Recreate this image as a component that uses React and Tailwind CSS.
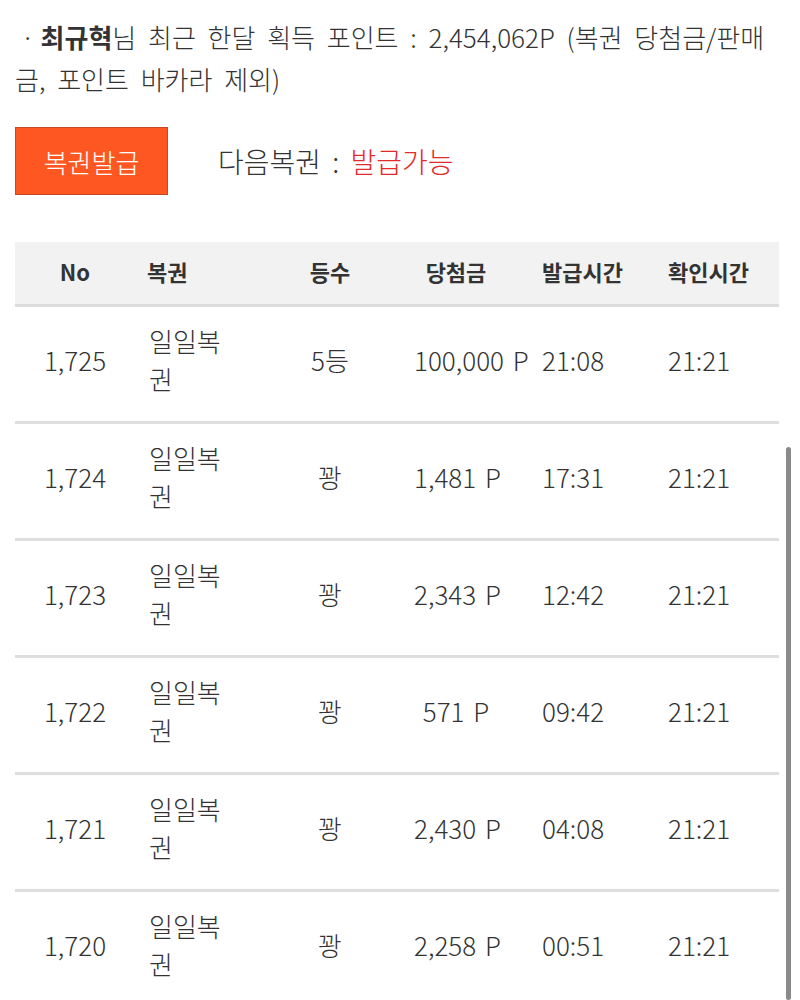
import React from "react";

const rows = [
  { no: "1,725", grade: "5등", prize: "100,000 P", issued: "21:08", checked: "21:21" },
  { no: "1,724", grade: "꽝", prize: "1,481 P", issued: "17:31", checked: "21:21" },
  { no: "1,723", grade: "꽝", prize: "2,343 P", issued: "12:42", checked: "21:21" },
  { no: "1,722", grade: "꽝", prize: "571 P", issued: "09:42", checked: "21:21" },
  { no: "1,721", grade: "꽝", prize: "2,430 P", issued: "04:08", checked: "21:21" },
  { no: "1,720", grade: "꽝", prize: "2,258 P", issued: "00:51", checked: "21:21" },
];

const font = { fontFamily: '"Noto Sans CJK KR", "Noto Sans", sans-serif' };

function Row({ r }) {
  return (
    <div className="grid grid-cols-[120px_135px_120px_152px_126px_1fr] items-center border-b-[3px] border-[#dedede] pt-[15px] pb-[23px] text-[26px] font-light leading-[38px] text-[#333]">
      <div className="text-center">{r.no}</div>
      <div className="pl-[14px]">
        <div className="w-[85px]">일일복권</div>
      </div>
      <div className="text-center">{r.grade}</div>
      <div className="pl-[24px]">
        <div className="w-[84px] whitespace-nowrap text-center [word-spacing:3px]">{r.prize}</div>
      </div>
      <div>{r.issued}</div>
      <div>{r.checked}</div>
    </div>
  );
}

export default function App() {
  return (
    <div className="relative min-h-[1000px] bg-white pl-[15px] pr-[21px] pt-[16px]" style={font}>
      <p className="text-[26px] font-light leading-[42px] text-[#333] [word-spacing:6px]">
        <span className="[word-spacing:0px]">&nbsp;·&nbsp;</span>
        <b className="font-bold">최규혁</b>님 최근 한달 획득 포인트 : 2,454,062P (복권 당첨금/판매
        <br />
        금, 포인트 바카라 제외)
      </p>

      <div className="mt-[27px] flex items-center">
        <button className="flex h-[68px] w-[153px] items-center justify-center border border-[#c84a22] bg-[#ff5722] text-[26px] font-light text-white">
          복권발급
        </button>
        <div className="ml-[50px] text-[28px] font-light text-[#333] [word-spacing:5px]">
          다음복권 : <span className="text-[#e42a2a]">발급가능</span>
        </div>
      </div>

      <div className="mt-[47px]">
        <div className="grid h-[65px] grid-cols-[120px_135px_120px_152px_126px_1fr] items-center border-b-[3px] border-[#dcdcdc] bg-[#f2f2f2] pb-[4px] text-[22px] font-bold text-[#333]">
          <div className="text-center">No</div>
          <div className="pl-[12px]">복권</div>
          <div className="text-center">등수</div>
          <div className="pl-[24px]">
            <div className="w-[84px] whitespace-nowrap text-center">당첨금</div>
          </div>
          <div>발급시간</div>
          <div>확인시간</div>
        </div>
        {rows.map((r) => (
          <Row key={r.no} r={r} />
        ))}
      </div>

      <div className="absolute right-[9px] top-[447px] h-[553px] w-[5px] rounded-full bg-[#8a8a8a]" />
    </div>
  );
}
